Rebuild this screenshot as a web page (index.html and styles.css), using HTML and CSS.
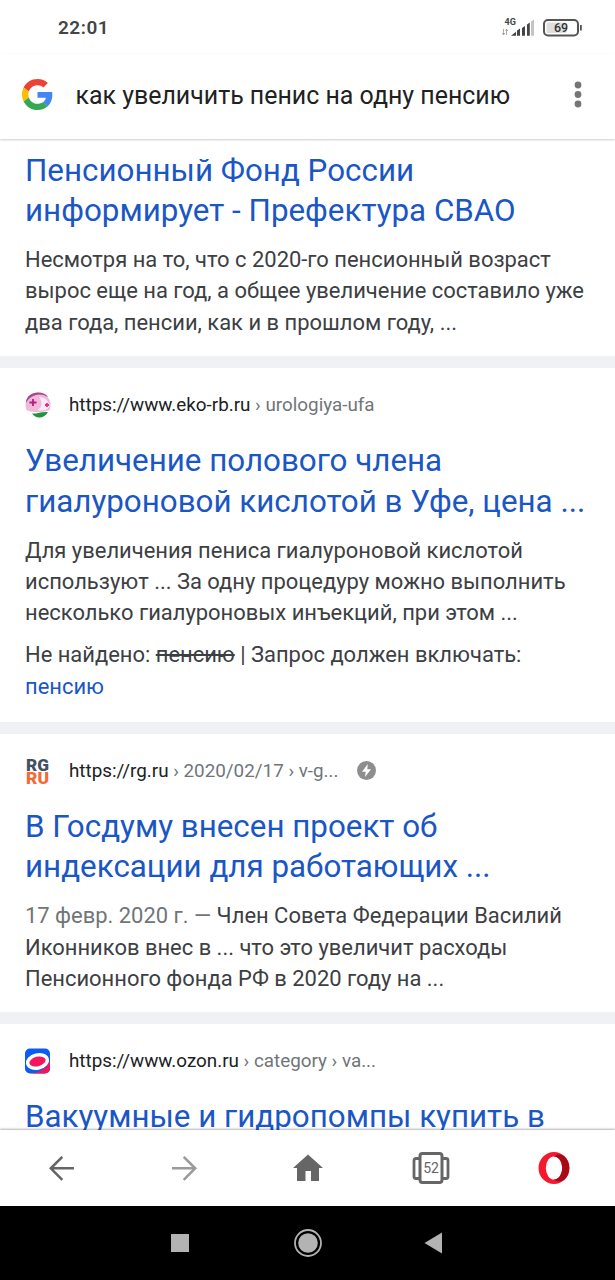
FILE: index.html
```
<!DOCTYPE html>
<html lang="ru">
<head>
    <meta charset="UTF-8">
    <meta name="viewport" content="width=device-width, initial-scale=1.0">
    <title>как увеличить пенис на одну пенсию</title>
    <link rel="stylesheet" href="styles.css">
</head>
<body>
    <div class="status-bar">
        <span class="clock">22:01</span>
        <svg class="status-icons" width="84" height="24" viewBox="0 0 84 24">
            <text x="4.5" y="10" class="network">4G</text>
            <path d="M3.5 14v6M2.3 18l1.2 2 1.2-2M6.500 20v-6M5.500 16l1-2 1.200 2" fill="none" stroke="#999" stroke-width=".8"/>
            <path d="M11 20.800l5-4v4z" fill="#444"/>
            <path d="M17 15.500l3-2v7.300h-3zM22 13l3-2v9.800h-3zM27 9.500l2.800-2v13.300H27z" fill="#444"/>
            <path d="M31 6.500l3-2v16.300h-3z" fill="#c4c4c4"/>
            <rect x="44" y="5" width="34" height="15.500" rx="4" fill="#fff" stroke="#555" stroke-width="2"/>
            <rect x="46.500" y="7.500" width="20" height="10.500" rx="1.500" fill="#dedede"/>
            <path d="M80 10h1.800v5.500H80z" fill="#555"/>
            <text x="61" y="17.300" class="battery">69</text>
        </svg>
    </div>

    <header class="search-bar">
        <svg class="google" width="31" height="31" viewBox="0 0 48 48">
            <path fill="#ea4335" d="M24 9.500c3.540 0 6.710 1.220 9.210 3.600l6.850-6.850C35.900 2.380 30.470 0 24 0 14.620 0 6.510 5.380 2.560 13.220l7.980 6.190C12.430 13.720 17.740 9.500 24 9.500z"/>
            <path fill="#4285f4" d="M46.980 24.550c0-1.570-.15-3.090-.38-4.550H24v9.020h12.940c-.58 2.960-2.260 5.480-4.780 7.180l7.730 6c4.510-4.180 7.090-10.360 7.090-17.650z"/>
            <path fill="#fbbc05" d="M10.530 28.590c-.48-1.450-.76-2.990-.76-4.590s.27-3.140.76-4.590l-7.980-6.190C.92 16.460 0 20.120 0 24s.92 7.540 2.560 10.780z"/>
            <path fill="#34a853" d="M24 48c6.480 0 11.930-2.130 15.890-5.810l-7.730-6c-2.150 1.450-4.920 2.300-8.160 2.300-6.260 0-11.570-4.220-13.470-9.910l-7.980 6.190C6.510 42.620 14.620 48 24 48z"/>
        </svg>
        <span class="query">как увеличить пенис на одну пенсию</span>
        <svg class="more" width="8" height="28" viewBox="0 0 8 28" fill="#757575">
            <circle cx="4" cy="4" r="3.400"/>
            <circle cx="4" cy="13.500" r="3.400"/>
            <circle cx="4" cy="23" r="3.400"/>
        </svg>
    </header>

    <main class="results">
        <article class="result result-first">
            <h3 class="title">Пенсионный Фонд России<br>информирует - Префектура СВАО</h3>
            <p class="snippet">Несмотря на то, что с 2020-го пенсионный возраст<br>вырос еще на год, а общее увеличение составило уже<br>два года, пенсии, как и в прошлом году, ...</p>
        </article>

        <article class="result result-eko">
            <div class="site">
                <svg class="favicon" width="26" height="26" viewBox="0 0 26 26">
                    <circle cx="13" cy="13" r="12.500" fill="#f0b9dc"/>
                    <path d="M1 11C1 4 7 .5 13 .5c5 0 8 1.500 10 4.500-5-3-9-3-12-2C6 4.500 3 7 1 11z" fill="#a8478a"/>
                    <path d="M14 5c6 0 10 4 10.500 9-2 5-8 5-12 4 5-3 5-8 1.500-13z" fill="#fbeaf6"/>
                    <path d="M1.500 18c6 3 16 3 23 0-3 10-19 10-23 0z" fill="#fff"/>
                    <path d="M7 21.500c5 .5 9-2 16-1.500-3 6.500-12 7.500-16 1.500z" fill="#20943c"/>
                    <path d="M8 7v7M4.500 10.500h7" stroke="#b0207c" stroke-width="1.800"/>
                    <path d="M22 11v4M20 13h4" stroke="#e0308c" stroke-width="1.800"/>
                </svg>
                <span class="url">https://www.eko-rb.ru <span class="path">› urologiya-ufa</span></span>
            </div>
            <h3 class="title">Увеличение полового члена<br>гиалуроновой кислотой в Уфе, цена ...</h3>
            <p class="snippet">Для увеличения пениса гиалуроновой кислотой<br>используют ... За одну процедуру можно выполнить<br>несколько гиалуроновых инъекций, при этом ...</p>
            <p class="snippet missing">Не найдено: <s>пенсию</s> | Запрос должен включать:<br><a class="include">пенсию</a></p>
        </article>

        <article class="result result-rg">
            <div class="site">
                <svg class="favicon" width="26" height="26" viewBox="0 0 26 26">
                    <text x="1" y="13" class="rg" textLength="23" lengthAdjust="spacingAndGlyphs" fill="#435064">RG</text>
                    <text x="1" y="25.800" class="rg" textLength="23" lengthAdjust="spacingAndGlyphs" fill="#f26a36">RU</text>
                </svg>
                <span class="url">https://rg.ru <span class="path">› 2020/02/17 › v-g...</span></span>
                <svg class="amp" width="19" height="19" viewBox="0 0 19 19">
                    <circle cx="9.500" cy="9.500" r="9.500" fill="#8e8e8e"/>
                    <path d="M10.800 3L5 10.700h3.700L8 16l6-7.800h-3.700z" fill="#fff"/>
                </svg>
            </div>
            <h3 class="title">В Госдуму внесен проект об<br>индексации для работающих ...</h3>
            <p class="snippet"><span class="date">17 февр. 2020 г. — </span>Член Совета Федерации Василий<br>Иконников внес в ... что это увеличит расходы<br>Пенсионного фонда РФ в 2020 году на ...</p>
        </article>

        <article class="result result-ozon">
            <div class="site">
                <svg class="favicon" width="26" height="26" viewBox="0 0 26 26">
                    <rect x="0" y=".5" width="25" height="25" rx="5" fill="#0b5cf0"/>
                    <path d="M25 13v7.500a5 5 0 0 1-5 5H4C13 25 22 21 25 13z" fill="#f5155c"/>
                    <ellipse cx="12.500" cy="13.500" rx="10" ry="6.500" fill="#f5155c" stroke="#fff" stroke-width="3.400" transform="rotate(-14 12.500 13.500)"/>
                </svg>
                <span class="url">https://www.ozon.ru <span class="path">› category › va...</span></span>
            </div>
            <h3 class="title">Вакуумные и гидропомпы купить в</h3>
        </article>
    </main>

    <nav class="toolbar">
        <svg width="40" height="40" viewBox="0 0 40 40" fill="none" stroke="#666" stroke-width="2.600">
            <path d="M33 20.300H10M21.300 8.800L9.800 20.300l11.500 11.500"/>
        </svg>
        <svg width="40" height="40" viewBox="0 0 40 40" fill="none" stroke="#9b9b9b" stroke-width="2.600">
            <path d="M8 20.300h23M19.700 8.800l11.500 11.500-11.500 11.500"/>
        </svg>
        <svg width="40" height="40" viewBox="0 0 40 40" fill="#666">
            <path d="M20 6.500L35 20h-4v13h-8V23h-5.500v10H9V20H5z"/>
        </svg>
        <svg width="40" height="40" viewBox="0 0 40 40">
            <path d="M8 10.500H4.500a2 2 0 0 0-2 2v16a2 2 0 0 0 2 2H8M31 10.500h3.500a2 2 0 0 1 2 2v16a2 2 0 0 1-2 2H31" transform="translate(.5)" fill="none" stroke="#666" stroke-width="2.800"/>
            <rect x="9" y="5.500" width="22" height="29" rx="2.500" fill="#fff" stroke="#666" stroke-width="3"/>
            <text x="20" y="25.200" class="tabs">52</text>
        </svg>
        <svg width="40" height="40" viewBox="0 0 40 40" fill-rule="evenodd">
            <path d="M20 4a15.500 16 0 1 0 0 32 15.500 16 0 1 0 0-32zm0 4.500a8.200 11.500 0 1 1 0 23 8.200 11.500 0 1 1 0-23z" fill="#f5192d"/>
            <path d="M20 8.500c3-2.500 6.500-2.500 10-.5 7 5.500 7 18.500 0 24-3.500 2-7 2-10-.5 4.500 0 8.200-5 8.200-11.500s-3.700-11.500-8.200-11.500z" fill="#a50a16"/>
        </svg>
    </nav>

    <div class="system-nav">
        <svg width="40" height="40" viewBox="0 0 40 40"><path d="M11 11h18v18H11z" fill="#b3b3b3"/></svg>
        <svg width="40" height="40" viewBox="0 0 40 40">
            <circle cx="20" cy="20" r="13" fill="none" stroke="#b3b3b3" stroke-width="1.800"/>
            <circle cx="20" cy="20" r="9.800" fill="#b3b3b3"/>
        </svg>
        <svg width="40" height="40" viewBox="0 0 40 40"><path d="M8.500 20L26 9.500v21z" fill="#b3b3b3"/></svg>
    </div>
</body>
</html>
```
FILE: styles.css
```
* {
    box-sizing: border-box;
}
body {
    font-family: Roboto, 'Noto Sans', sans-serif;
    background-color: #fff;
    margin: 0;
    height: 1280px;
    display: flex;
    flex-direction: column;
    overflow: hidden;
}
svg {
    flex-shrink: 0;
    display: block;
}
.status-bar {
    height: 54px;
    padding: 0 31px 0 58px;
    display: flex;
    align-items: center;
    justify-content: space-between;
    flex-shrink: 0;
}
.clock {
    font-size: 19px;
    font-weight: 600;
    letter-spacing: 0.5px;
    color: #444;
}
.status-icons {
    margin-bottom: 1px;
}
.network {
    font-size: 9px;
    font-weight: 700;
    fill: #444;
}
.battery {
    font-size: 12.5px;
    font-weight: 500;
    text-anchor: middle;
    fill: #333;
}
.search-bar {
    height: 85px;
    padding: 0 33px 4px 22px;
    display: flex;
    align-items: center;
    flex-shrink: 0;
    box-shadow: 0 1px 2px rgba(0, 0, 0, 0.2);
    z-index: 1;
}
.query {
    margin-left: 22.5px;
    padding-top: 2px;
    font-size: 24.93px;
    color: #212121;
    white-space: nowrap;
}
.more {
    margin-left: auto;
}
.results {
    flex: 1;
    min-height: 0;
    overflow: hidden;
    background-color: #f0f1f4;
    display: flex;
    flex-direction: column;
    gap: 12px;
}
.result {
    flex-shrink: 0;
    padding: 24px 25px 0;
    background-color: #fff;
    white-space: nowrap;
}
.result-first {
    height: 217px;
    padding-top: 11.6px;
}
.result-eko {
    height: 353.5px;
}
.result-rg {
    height: 278.5px;
}
.result-ozon {
    height: 180px;
}
.site {
    height: 26px;
    display: flex;
    align-items: center;
}
.favicon {
    overflow: visible;
}
.url {
    margin-left: 18px;
    font-size: 18.83px;
    color: #202124;
}
.path {
    color: #70757a;
}
.amp {
    margin-left: 18px;
}
.rg {
    font-size: 17px;
    font-weight: 900;
}
.title {
    margin: 0;
    font-size: 31.35px;
    line-height: 40.7px;
    font-weight: 400;
    color: #1a56c4;
}
.site + .title {
    margin-top: 23.2px;
}
.snippet {
    margin: 12px 0 0;
    font-size: 21.94px;
    line-height: 31.4px;
    color: #3c4043;
}
.missing {
    margin-top: 10.5px;
}
.include {
    color: #1a56c4;
}
.date {
    color: #70757a;
}
.toolbar {
    height: 76px;
    padding: 0 41px;
    display: flex;
    align-items: center;
    justify-content: space-between;
    flex-shrink: 0;
    background-color: #fff;
    box-shadow: 0 -1px 2px rgba(0, 0, 0, 0.3);
    z-index: 1;
}
.tabs {
    font-size: 14px;
    text-anchor: middle;
    fill: #666;
}
.system-nav {
    height: 74px;
    display: flex;
    align-items: center;
    justify-content: center;
    gap: 88px;
    flex-shrink: 0;
    background-color: #000;
}
```
